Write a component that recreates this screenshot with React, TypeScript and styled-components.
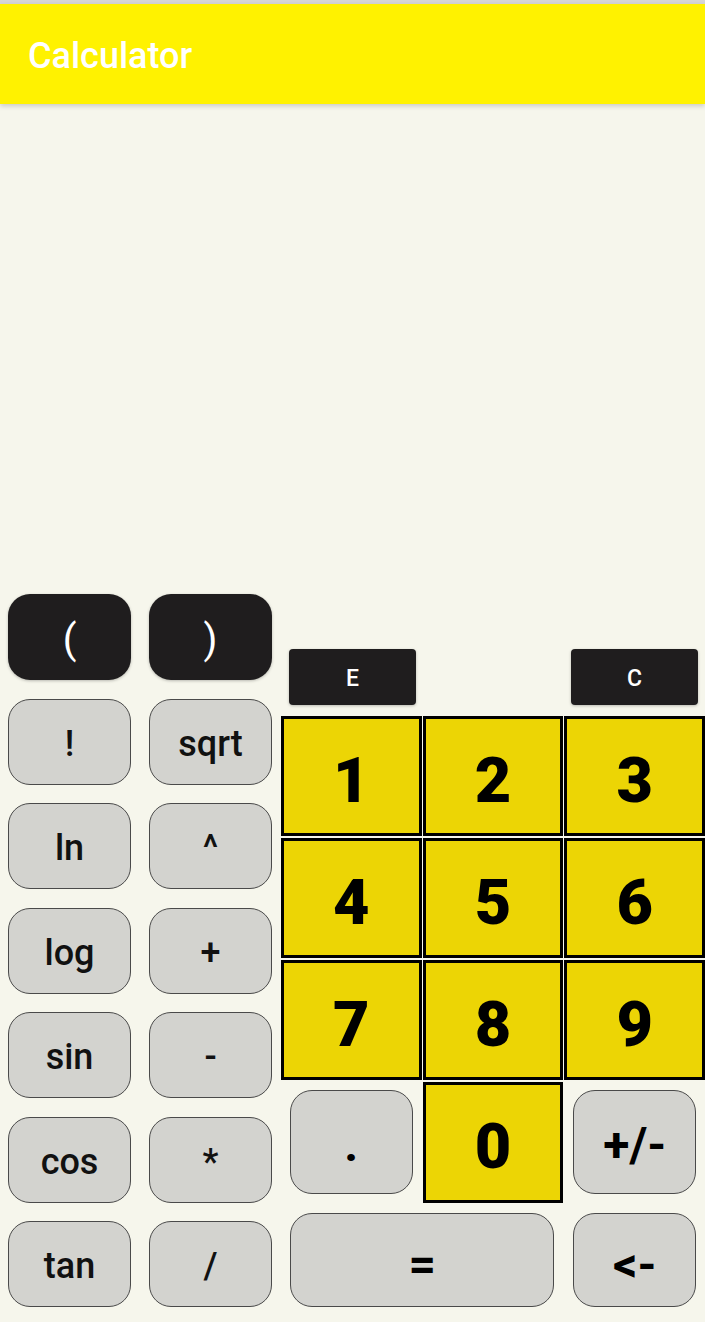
import styled, { createGlobalStyle, css } from 'styled-components';

const GlobalStyle = createGlobalStyle`
  html, body {
    margin: 0;
    padding: 0;
    background: #f6f6ec;
  }
  #root {
    height: 1322px;
  }
`;

const Screen = styled.div`
  display: flex;
  flex-direction: column;
  height: 1322px;
  background: #f6f6ec;
  font-family: Roboto, 'Noto Sans', sans-serif;
  overflow: hidden;
`;

const StatusStrip = styled.div`
  height: 4px;
  background: #d6d6d6;
`;

const AppBar = styled.header`
  display: flex;
  align-items: center;
  height: 100px;
  padding: 4px 28px 0;
  box-sizing: border-box;
  background: #fff200;
  color: #fff;
  font-size: 36px;
  font-weight: 500;
  box-shadow: 0 2px 5px rgba(0, 0, 0, 0.18);
  position: relative;
  z-index: 1;
`;

const Display = styled.div`
  flex: 1;
`;

const Keypad = styled.div`
  display: flex;
  gap: 9px;
  padding: 0 0 15px 8px;
`;

const FunctionPanel = styled.div`
  display: grid;
  grid-template-columns: 123px 123px;
  grid-auto-rows: 86px;
  column-gap: 18px;
  row-gap: 18.5px;
`;

const roundKey = css`
  display: flex;
  align-items: center;
  justify-content: center;
  border-radius: 22px;
  box-sizing: border-box;
  font-family: Roboto, 'Noto Sans', sans-serif;
  cursor: pointer;
`;

const FuncKey = styled.button<{ $dark?: boolean }>`
  ${roundKey}
  font-size: 36px;
  font-weight: 500;
  padding: 4px 0 0;
  ${(p) =>
    p.$dark
      ? css`
          background: #1f1d1e;
          color: #fff;
          border: none;
          font-weight: 400;
          font-size: 40px;
          box-shadow: 0 1px 3px rgba(0, 0, 0, 0.25);
        `
      : css`
          background: #d3d3cf;
          color: #111;
          border: 1px solid #4a4a4a;
        `}
`;

const NumberPanel = styled.div`
  flex: 1;
  display: flex;
  flex-direction: column;
`;

const ClearRow = styled.div`
  display: flex;
  justify-content: space-between;
  padding: 55px 7px 0 8px;
  margin-bottom: 11px;
`;

const SmallKey = styled.button`
  width: 127px;
  height: 56px;
  border: none;
  border-radius: 4px;
  background: #1f1d1e;
  color: #fff;
  font-family: Roboto, 'Noto Sans', sans-serif;
  font-size: 23px;
  font-weight: 500;
  padding: 2px 0 0;
  box-shadow: 0 1px 3px rgba(0, 0, 0, 0.25);
`;

const DigitGrid = styled.div`
  display: grid;
  grid-template-columns: repeat(3, 1fr);
  grid-template-rows: 120px 120px 120px 121px;
  column-gap: 1px;
  row-gap: 2px;
`;

const DigitKey = styled.button`
  background: #ecd505;
  border: 3px solid #000;
  color: #000;
  font-family: Roboto, 'Noto Sans', sans-serif;
  font-size: 63px;
  font-weight: 900;
  padding: 8px 0 0;
`;

const SideKey = styled.button`
  ${roundKey}
  margin: 8px 9px 9px 9px;
  background: #d3d3cf;
  color: #000;
  border: 1px solid #4a4a4a;
  font-size: 48px;
  font-weight: 700;
  padding: 4px 0 0;
`;

const BottomRow = styled.div`
  display: grid;
  grid-template-columns: repeat(3, 1fr);
  column-gap: 1px;
  height: 94px;
  margin-top: 10px;
`;

const WideKey = styled(SideKey)<{ $span?: number }>`
  margin: 0 9px;
  padding: 8px 0 0;
  grid-column: span ${(p) => p.$span ?? 1};
`;

const functionKeys = ['!', 'sqrt', 'ln', '^', 'log', '+', 'sin', '-', 'cos', '*', 'tan', '/'];

export default function App() {
  return (
    <Screen>
      <GlobalStyle />
      <StatusStrip />
      <AppBar>Calculator</AppBar>
      <Display />
      <Keypad>
        <FunctionPanel>
          <FuncKey $dark>(</FuncKey>
          <FuncKey $dark>)</FuncKey>
          {functionKeys.map((k) => (
            <FuncKey key={k}>{k}</FuncKey>
          ))}
        </FunctionPanel>
        <NumberPanel>
          <ClearRow>
            <SmallKey>E</SmallKey>
            <SmallKey>C</SmallKey>
          </ClearRow>
          <DigitGrid>
            {['1', '2', '3', '4', '5', '6', '7', '8', '9'].map((d) => (
              <DigitKey key={d}>{d}</DigitKey>
            ))}
            <SideKey>.</SideKey>
            <DigitKey>0</DigitKey>
            <SideKey>+/-</SideKey>
          </DigitGrid>
          <BottomRow>
            <WideKey $span={2}>=</WideKey>
            <WideKey>&lt;-</WideKey>
          </BottomRow>
        </NumberPanel>
      </Keypad>
    </Screen>
  );
}
